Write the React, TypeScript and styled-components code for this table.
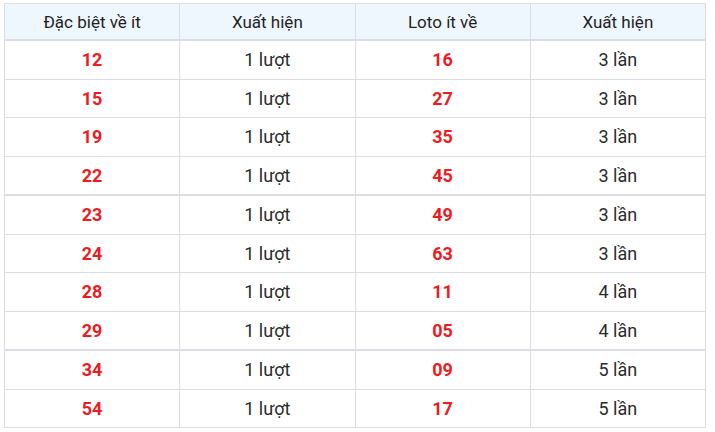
import React from 'react'
import styled, { createGlobalStyle } from 'styled-components'

const GlobalStyle = createGlobalStyle`
  body {
    margin: 0;
    background: #ffffff;
    font-family: Roboto, 'Liberation Sans', Arial, sans-serif;
  }
`

const Wrapper = styled.div`
  padding: 3px 9px 0 4px;
`

const Table = styled.table`
  width: 702px;
  border-collapse: collapse;
  table-layout: fixed;
`

const HeadCell = styled.th`
  height: 35px;
  padding: 0;
  background: #eef6fe;
  border: 1px solid #dcdde2;
  border-bottom: 2px solid #dcdde2;
  color: #1f1f1f;
  font-size: 17px;
  font-weight: 400;
  text-align: center;
`

const Row = styled.tr<{ $groupStart: boolean }>`
  td {
    border-top: ${(props) => (props.$groupStart ? '2px' : '1px')} solid #dcdde2;
  }
`

const Cell = styled.td<{ $hot?: boolean }>`
  height: 37.5px;
  padding: 0;
  border: 1px solid #dcdde2;
  text-align: center;
  color: ${(props) => (props.$hot ? '#ec1c24' : '#2b2b2b')};
  font-size: 18px;
  font-weight: ${(props) => (props.$hot ? 700 : 400)};
`

const rows = [
  ['12', '1 lượt', '16', '3 lần'],
  ['15', '1 lượt', '27', '3 lần'],
  ['19', '1 lượt', '35', '3 lần'],
  ['22', '1 lượt', '45', '3 lần'],
  ['23', '1 lượt', '49', '3 lần'],
  ['24', '1 lượt', '63', '3 lần'],
  ['28', '1 lượt', '11', '4 lần'],
  ['29', '1 lượt', '05', '4 lần'],
  ['34', '1 lượt', '09', '5 lần'],
  ['54', '1 lượt', '17', '5 lần'],
]

export default function App() {
  return (
    <Wrapper>
      <GlobalStyle />
      <Table>
        <thead>
          <tr>
            <HeadCell>Đặc biệt về ít</HeadCell>
            <HeadCell>Xuất hiện</HeadCell>
            <HeadCell>Loto ít về</HeadCell>
            <HeadCell>Xuất hiện</HeadCell>
          </tr>
        </thead>
        <tbody>
          {rows.map((r, i) => (
            <Row key={i} $groupStart={i === 4 || i === 8}>
              <Cell $hot>{r[0]}</Cell>
              <Cell>{r[1]}</Cell>
              <Cell $hot>{r[2]}</Cell>
              <Cell>{r[3]}</Cell>
            </Row>
          ))}
        </tbody>
      </Table>
    </Wrapper>
  )
}
